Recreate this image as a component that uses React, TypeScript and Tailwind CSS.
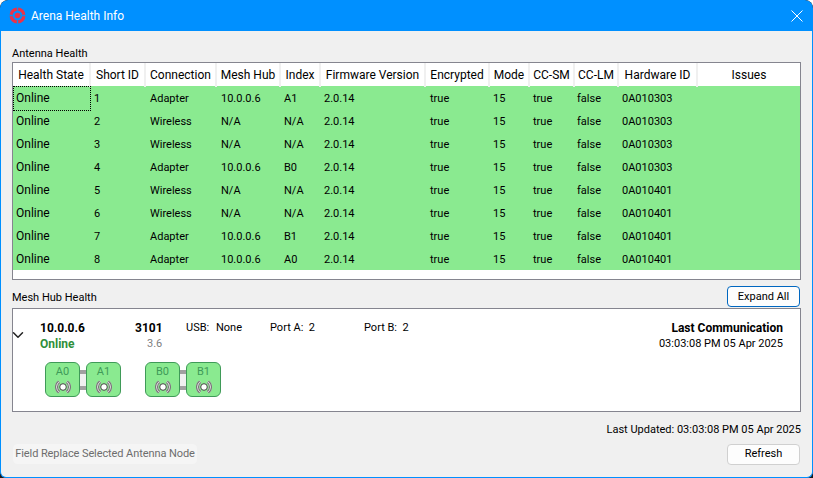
import { ChevronDown } from 'lucide-react';

const headers = [
  'Health State', 'Short ID', 'Connection', 'Mesh Hub', 'Index', 'Firmware Version',
  'Encrypted', 'Mode', 'CC-SM', 'CC-LM', 'Hardware ID', 'Issues',
];

const rows = [
  ['Online', '1', 'Adapter', '10.0.0.6', 'A1', '0A010303'],
  ['Online', '2', 'Wireless', 'N/A', 'N/A', '0A010303'],
  ['Online', '3', 'Wireless', 'N/A', 'N/A', '0A010303'],
  ['Online', '4', 'Adapter', '10.0.0.6', 'B0', '0A010303'],
  ['Online', '5', 'Wireless', 'N/A', 'N/A', '0A010401'],
  ['Online', '6', 'Wireless', 'N/A', 'N/A', '0A010401'],
  ['Online', '7', 'Adapter', '10.0.0.6', 'B1', '0A010401'],
  ['Online', '8', 'Adapter', '10.0.0.6', 'A0', '0A010401'],
];

const columns = 'grid grid-cols-[78px_55px_71px_64px_40px_105px_64px_40px_45px_44px_79px_102px]';

function AppLogo() {
  return (
    <svg width="17" height="17" viewBox="0 0 17 17" fill="none">
      <circle cx="8.5" cy="8.5" r="6.4" stroke="#ec3148" strokeWidth="3.2" />
      <circle cx="8.5" cy="8.5" r="2.8" fill="#ec3148" />
      <path d="M8.5 0v3.8M8.5 13.2v3.8M0 8.5h3.8M13.2 8.5h3.8" stroke="#0a8fef" strokeWidth="1.4" />
    </svg>
  );
}

function CloseIcon() {
  return (
    <svg width="12" height="12" viewBox="0 0 12 12" fill="none">
      <path d="M.5.5l11 11M11.5.5l-11 11" stroke="#fff" strokeWidth="1" />
    </svg>
  );
}

function Broadcast() {
  return (
    <svg width="18" height="14" viewBox="0 0 18 14" fill="none">
      <path d="M5.3 1.7A6.5 6.5 0 0 0 5.3 12.3" stroke="#f4f4f4" strokeWidth="3" />
      <path d="M12.7 1.7A6.5 6.5 0 0 1 12.7 12.3" stroke="#f4f4f4" strokeWidth="3" />
      <path d="M5.85 2.5A5.5 5.5 0 0 0 5.85 11.5M4.7.9A7.5 7.5 0 0 0 4.7 13.1" stroke="#777" strokeWidth="1.2" />
      <path d="M12.15 2.5A5.5 5.5 0 0 1 12.15 11.5M13.3.9A7.5 7.5 0 0 1 13.3 13.1" stroke="#777" strokeWidth="1.2" />
      <circle cx="9" cy="7" r="3.3" fill="#fff" stroke="#444" strokeWidth="1" />
    </svg>
  );
}

function Node({ label }: { label: string }) {
  return (
    <div className="flex h-[35px] w-[35px] flex-col items-center rounded-[6px] border border-[#3f9a58] bg-[#8aea90] pt-[1px]">
      <span className="h-[16px] text-[11px] leading-[16px] text-[#3f9a58]">{label}</span>
      <Broadcast />
    </div>
  );
}

function NodePair({ left, right }: { left: string; right: string }) {
  return (
    <div className="flex items-center">
      <Node label={left} />
      <div className="flex h-[20px] w-[6px] flex-col justify-between bg-[#f0f0f0]">
        <div className="h-[4px] bg-[#a0a0a0]" />
        <div className="h-[4px] bg-[#a0a0a0]" />
      </div>
      <Node label={right} />
    </div>
  );
}

export default function App() {
  return (
    <div className="flex h-[478px] w-[813px] flex-col overflow-hidden rounded-t-[8px] bg-[#1b1b1b] font-['Roboto','Open_Sans',sans-serif] text-[11px] text-black">
      <div className="flex h-[31px] shrink-0 items-center rounded-t-[8px] bg-[#0090ff] pl-[9px] pr-[10px] text-white">
        <AppLogo />
        <span className="ml-[5px] text-[12px]">Arena Health Info</span>
        <span className="ml-auto flex"><CloseIcon /></span>
      </div>

      <div className="flex flex-1 flex-col rounded-b-[6px] border-x border-b border-[#0090ff] bg-[#f0f0f0] px-[11px]">
        <div className="h-[31px] pt-[14px] leading-[17px]">Antenna Health</div>

        <div className="h-[218px] border border-[#85858f] bg-white">
          <div className={`${columns} h-[23px] text-[12px]`}>
            {headers.map((h) => (
              <div key={h} className="whitespace-nowrap border-r-2 border-[#f0f0f0] text-center leading-[24px] last:border-r-0">
                {h}
              </div>
            ))}
          </div>
          {rows.map((r, i) => (
            <div key={r[1]} className={`${columns} h-[23px] bg-[#8aea90] leading-[25px]`}>
              <div className={`pl-[3px] text-[12px] ${i === 0 ? 'outline-1 -outline-offset-1 outline-dotted outline-black' : ''}`}>{r[0]}</div>
              <div className="pl-[3px]">{r[1]}</div>
              <div className="pl-[4px]">{r[2]}</div>
              <div className="pl-[4px]">{r[3]}</div>
              <div className="pl-[3px]">{r[4]}</div>
              <div className="pl-[3px]">2.0.14</div>
              <div className="pl-[4px]">true</div>
              <div className="pl-[3px]">15</div>
              <div className="pl-[3px]">true</div>
              <div className="pl-[2px]">false</div>
              <div className="pl-[3px]">{r[5]}</div>
              <div />
            </div>
          ))}
        </div>

        <div className="flex h-[28px] items-end justify-between pb-[1px]">
          <span className="pb-[1px] leading-[17px]">Mesh Hub Health</span>
          <button className="mr-[1px] h-[21px] w-[73px] rounded-[4px] border border-[#0067c0] bg-[#fdfdfd] leading-[18px]">
            Expand All
          </button>
        </div>

        <div className="flex h-[104px] border border-[#85858f] bg-white">
          <div className="flex w-[27px] shrink-0 pt-[17px]">
            <ChevronDown className="h-[18px] w-[18px] -translate-x-[4px] text-[#222]" strokeWidth={2} />
          </div>
          <div className="flex flex-1 flex-col pt-[11px]">
            <div className="flex h-[16px] items-center leading-[16px]">
              <span className="w-[95px] text-[12px] font-bold">10.0.0.6</span>
              <span className="w-[51px] text-[12px] font-bold">3101</span>
              <span className="w-[30px]">USB:</span>
              <span className="w-[54px]">None</span>
              <span className="w-[94px]">Port A:&nbsp; 2</span>
              <span>Port B:&nbsp; 2</span>
              <span className="ml-auto pr-[17px] text-[12px] font-bold">Last Communication</span>
            </div>
            <div className="flex h-[16px] items-center leading-[16px]">
              <span className="w-[107px] text-[12px] font-bold text-[#2f8f3a]">Online</span>
              <span className="text-[#808080]">3.6</span>
              <span className="ml-auto pr-[17px]">03:03:08 PM 05 Apr 2025</span>
            </div>
            <div className="mt-[10px] flex gap-[24px] pl-[5px]">
              <NodePair left="A0" right="A1" />
              <NodePair left="B0" right="B1" />
            </div>
          </div>
        </div>

        <div className="h-[32px] pt-[9px] text-right leading-[17px]">Last Updated: 03:03:08 PM 05 Apr 2025</div>

        <div className="flex items-start justify-between">
          <button className="ml-[1px] h-[20px] w-[184px] whitespace-nowrap rounded-[4px] border border-[#f5f5f5] bg-[#f5f5f5] tracking-[-0.09px] text-[#6d6d6d]">
            Field Replace Selected Antenna Node
          </button>
          <button className="mr-[1px] h-[21px] w-[73px] rounded-[4px] border border-[#d0d0d0] bg-[#fdfdfd]">Refresh</button>
        </div>
      </div>
    </div>
  );
}
